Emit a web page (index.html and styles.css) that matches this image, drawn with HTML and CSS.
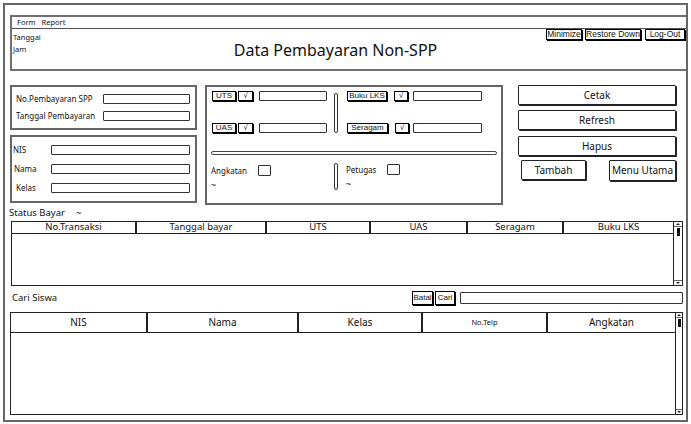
FILE: index.html
```html
<!DOCTYPE html>
<html lang="id">
<head>
<meta charset="utf-8">
<title>Data Pembayaran Non-SPP</title>
<link rel="stylesheet" href="styles.css">
</head>
<body>
<div class="window">
  <div class="header">
    <div class="menubar"><span>Form</span><span>Report</span></div>
    <div class="header-body">
      <div class="datetime"><div>Tanggal</div><div>Jam</div></div>
      <h1 class="title">Data Pembayaran Non-SPP</h1>
      <div class="winbtns">
        <div class="wbtn w-min">Minimize</div>
        <div class="wbtn w-res">Restore Down</div>
        <div class="wbtn w-log">Log-Out</div>
      </div>
    </div>
  </div>

  <div class="main">
    <div class="leftcol">
      <div class="panel p1">
        <div class="frow"><span class="lbl l87">No.Pembayaran SPP</span><span class="input i87"></span></div>
        <div class="frow"><span class="lbl l87">Tanggal Pembayaran</span><span class="input i87"></span></div>
      </div>
      <div class="panel p2">
        <div class="frow r2"><span class="lbl l38">NIS</span><span class="input i139"></span></div>
        <div class="frow r2"><span class="lbl l38 pad1">Nama</span><span class="input i139"></span></div>
        <div class="frow r2"><span class="lbl l38 pad3">Kelas</span><span class="input i139"></span></div>
      </div>
    </div>

    <div class="panel mid">
      <div class="mid-top">
        <div class="mgroup">
          <div class="mrow mrow-l"><span class="tag t24">UTS</span><span class="tag chk c15">√</span><span class="input i68"></span></div>
          <div class="mrow mrow-l"><span class="tag t24">UAS</span><span class="tag chk c15">√</span><span class="input i68"></span></div>
        </div>
        <div class="vsep vsep-top"></div>
        <div class="mgroup mgroup-r">
          <div class="mrow mrow-r"><span class="tag t40">Buku LKS</span><span class="tag chk c14">√</span><span class="input i69"></span></div>
          <div class="mrow mrow-r"><span class="tag t41">Seragam</span><span class="tag chk c14 cshift">√</span><span class="input i69"></span></div>
        </div>
      </div>
      <div class="hsep"></div>
      <div class="mid-bottom">
        <div class="bgroup bgroup-l">
          <div class="brow"><span class="blbl b47">Angkatan</span><span class="box"></span></div>
          <div class="tilde">~</div>
        </div>
        <div class="vsep vsep-bot"></div>
        <div class="bgroup bgroup-r">
          <div class="brow brow-r"><span class="blbl b41">Petugas</span><span class="box"></span></div>
          <div class="tilde">~</div>
        </div>
      </div>
    </div>

    <div class="actions">
      <div class="abtn">Cetak</div>
      <div class="abtn a-ref">Refresh</div>
      <div class="abtn a-hap">Hapus</div>
      <div class="arow">
        <div class="abtn a-tam">Tambah</div>
        <div class="abtn a-menu">Menu Utama</div>
      </div>
    </div>
  </div>

  <div class="status"><span>Status Bayar</span><span class="stilde">~</span></div>

  <div class="table t1">
    <div class="tgrid g1">
      <div class="th">No.Transaksi</div>
      <div class="th">Tanggal bayar</div>
      <div class="th">UTS</div>
      <div class="th">UAS</div>
      <div class="th">Seragam</div>
      <div class="th">Buku LKS</div>
    </div>
    <div class="scroll s1">
      <div class="sarrow up"><span class="tri-up"></span></div>
      <div class="thumb"></div>
      <div class="strack"></div>
      <div class="sarrow down"><span class="tri-down"></span></div>
    </div>
  </div>

  <div class="cari">
    <span class="cari-lbl">Cari Siswa</span>
    <div class="cari-tools">
      <span class="tag sb b-batal">Batal</span>
      <span class="tag sb b-cari">Cari</span>
      <span class="input i-cari"></span>
    </div>
  </div>

  <div class="table t2">
    <div class="tgrid g2">
      <div class="th">NIS</div>
      <div class="th">Nama</div>
      <div class="th">Kelas</div>
      <div class="th small">No.Telp</div>
      <div class="th">Angkatan</div>
    </div>
    <div class="scroll s2">
      <div class="sarrow up"><span class="tri-up"></span></div>
      <div class="thumb"></div>
      <div class="strack"></div>
      <div class="sarrow down"><span class="tri-down"></span></div>
    </div>
  </div>
</div>
</body>
</html>
```

FILE: styles.css
```css
* { box-sizing: border-box; }

body {
  margin: 0;
  background: #fff;
  color: #111;
  font-family: "Noto Sans", "DejaVu Sans", sans-serif;
}

.window {
  margin: 3px;
  width: 685px;
  height: 419px;
  border: 2px solid #666;
}

/* ---------- header ---------- */
.header {
  margin: 10px 0 0 5px;
  width: 676px;
  height: 56px;
  border: 2px solid #707070;
  border-right: none;
}

.menubar {
  height: 12px;
  border-bottom: 1px solid #555;
  display: flex;
  gap: 6px;
  padding-left: 5px;
  font-size: 7.5px;
  line-height: 11px;
}

.header-body {
  display: flex;
  height: 40px;
}

.datetime {
  width: 113px;
  padding: 2px 0 0 1px;
  font-size: 7.5px;
  line-height: 12px;
}

.title {
  flex: 1;
  margin: 0;
  padding-top: 11px;
  font-size: 16px;
  font-weight: 400;
  line-height: 20px;
  text-align: center;
  color: #111;
}

.winbtns {
  display: flex;
  align-self: flex-start;
  margin-right: 1px;
}

.wbtn {
  height: 11px;
  border: 1px solid #000;
  box-shadow: 1px 1px 0 #000;
  background: #fff;
  font-family: "Liberation Sans", Arial, sans-serif;
  font-size: 8.5px;
  line-height: 9px;
  text-align: center;
  white-space: nowrap;
}
.w-min { width: 36px; }
.w-res { width: 56px; margin-left: 3px; }
.w-log { width: 40px; margin-left: 4px; }

/* ---------- main area ---------- */
.main {
  display: flex;
  margin: 14px 0 0 5px;
  height: 120px;
}

.panel {
  border: 2px solid #666;
}

.leftcol {
  width: 187px;
  display: flex;
  flex-direction: column;
  gap: 5px;
}

.p1 { height: 45px; padding: 5px 5px 0 4px; }
.p2 { height: 68px; padding: 6px 5px 0 1px; }

.frow {
  display: flex;
  align-items: center;
  height: 10px;
  margin-top: 2px;
}
.p1 .frow { margin-bottom: 7px; }
.p2 .frow { margin-bottom: 9px; }

.lbl {
  font-size: 8px;
  line-height: 10px;
  white-space: nowrap;
}
.l87 { width: 87px; }
.l38 { width: 38px; }
.pad1 { padding-left: 1px; }
.pad3 { padding-left: 3px; }

.input {
  display: block;
  height: 10px;
  border: 1px solid #333;
  border-radius: 1px;
  background: #fff;
}
.i87 { width: 87px; }
.i139 { width: 139px; }
.i68 { width: 68px; }
.i69 { width: 69px; }

/* middle panel */
.mid {
  margin-left: 8px;
  width: 298px;
  height: 120px;
}

.mid-top {
  display: flex;
  height: 42px;
  margin-top: 4px;
  padding-left: 5px;
}

.mgroup {
  display: flex;
  flex-direction: column;
  justify-content: space-between;
}

.mrow {
  display: grid;
  align-items: center;
  height: 10px;
}
.mrow-l { grid-template-columns: 26px 21px 68px; }
.mrow-r { grid-template-columns: 47px 19px 69px; }

.mgroup-r { margin-left: 9px; }

.tag {
  display: block;
  height: 10px;
  border: 1px solid #000;
  box-shadow: 1px 1px 0 #000;
  background: #fff;
  font-family: "Liberation Sans", Arial, sans-serif;
  font-size: 8px;
  line-height: 8px;
  text-align: center;
  white-space: nowrap;
}
.t24 { width: 24px; }
.t40 { width: 40px; }
.t41 { width: 41px; }
.chk { font-size: 7.5px; }
.c15 { width: 15px; }
.c14 { width: 14px; }
.cshift { margin-left: 1px; }

.vsep {
  width: 4px;
  border: 1px solid #333;
  border-radius: 2px;
}
.vsep-top { margin: 2px 0 0 7px; height: 40px; }
.vsep-bot { height: 27px; }

.hsep {
  margin: 18px 4px 0 4px;
  height: 4px;
  border: 1px solid #444;
  border-radius: 2px;
}

.mid-bottom {
  display: flex;
  margin-top: 8px;
  padding-left: 4px;
}

.bgroup-l { width: 123px; }
.bgroup-r { margin-left: 8px; }

.brow {
  display: flex;
  align-items: center;
  height: 11px;
  margin-top: 2px;
}
.brow-r { margin-top: 1px; }

.blbl {
  font-size: 8px;
  line-height: 11px;
}
.b47 { width: 47px; }
.b41 { width: 41px; }

.box {
  display: block;
  width: 13px;
  height: 11px;
  border: 1px solid #333;
  border-radius: 1px;
}

.tilde {
  margin-top: 4px;
  font-size: 9px;
  line-height: 10px;
}

/* action buttons */
.actions {
  margin-left: 15px;
  width: 158px;
  display: flex;
  flex-direction: column;
}

.abtn {
  height: 20px;
  border: 1px solid #222;
  box-shadow: 1px 1px 0 #222;
  border-radius: 1px;
  background: #fff;
  font-size: 10px;
  line-height: 18px;
  text-align: center;
  white-space: nowrap;
}
.a-ref { margin-top: 5px; }
.a-hap { margin-top: 6px; }

.arow {
  display: flex;
  margin-top: 4px;
}
.a-tam { width: 65px; margin-left: 3px; }
.a-menu { width: 67px; height: 21px; margin-left: auto; line-height: 19px; }

/* ---------- status + tables ---------- */
.status {
  margin-top: 2px;
  height: 12px;
  padding-left: 4px;
  font-size: 9.5px;
  line-height: 12px;
}
.stilde { margin-left: 11px; }

.table {
  display: flex;
  border: 1px solid #222;
  background: #fff;
}
.t1 {
  margin: 2px 0 0 6px;
  width: 672px;
  height: 65px;
}
.t2 {
  margin: 7px 0 0 5px;
  width: 673px;
  height: 103px;
}

.tgrid {
  display: grid;
  align-content: start;
}
.g1 { grid-template-columns: 123px 130px 104px 97px 96px 111px; }
.g2 { grid-template-columns: 135px 151px 124px 125px 129px; }

.th {
  border-bottom: 1px solid #222;
  border-left: 2px solid #222;
  text-align: center;
  white-space: nowrap;
  color: #111;
}
.th:first-child { border-left: none; }
.g1 .th { height: 12px; line-height: 10px; font-size: 9.5px; }
.g2 .th { height: 20px; line-height: 19px; font-size: 10px; }
.g2 .th.small { font-size: 7.5px; }

.scroll {
  display: flex;
  flex-direction: column;
  align-items: stretch;
  border-left: 1px solid #222;
}
.s1 { width: 9px; }
.s2 { width: 7px; }

.sarrow {
  height: 5px;
  display: flex;
  align-items: center;
  justify-content: center;
}
.sarrow.up { border-bottom: 1px solid #666; }
.sarrow.down { border-top: 1px solid #666; }

.tri-up, .tri-down {
  width: 0;
  height: 0;
  border-left: 2px solid transparent;
  border-right: 2px solid transparent;
}
.tri-up { border-bottom: 2px solid #222; }
.tri-down { border-top: 2px solid #222; }

.thumb {
  width: 3px;
  height: 8px;
  margin: 1px auto 0;
  background: #111;
}
.strack { flex: 1; }

/* search row */
.cari {
  display: flex;
  align-items: center;
  margin-top: 5px;
  height: 14px;
  padding-left: 7px;
}
.cari-lbl {
  font-size: 9.5px;
  line-height: 12px;
}
.cari-tools {
  display: flex;
  align-items: center;
  margin-left: auto;
  margin-right: 3px;
}
.sb {
  height: 14px;
  line-height: 12px;
  font-size: 8px;
}
.b-batal { width: 21px; }
.b-cari { width: 20px; margin-left: 2px; }
.i-cari { width: 223px; height: 12px; margin-left: 5px; }
```
